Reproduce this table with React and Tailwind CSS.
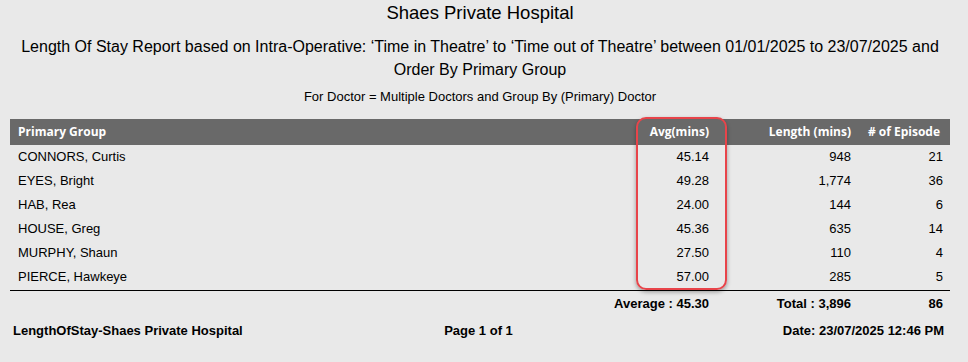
import React from 'react';

const rows = [
  { name: 'CONNORS, Curtis', avg: '45.14', length: '948', episodes: '21' },
  { name: 'EYES, Bright', avg: '49.28', length: '1,774', episodes: '36' },
  { name: 'HAB, Rea', avg: '24.00', length: '144', episodes: '6' },
  { name: 'HOUSE, Greg', avg: '45.36', length: '635', episodes: '14' },
  { name: 'MURPHY, Shaun', avg: '27.50', length: '110', episodes: '4' },
  { name: 'PIERCE, Hawkeye', avg: '57.00', length: '285', episodes: '5' },
];

const cols = 'grid grid-cols-[1fr_120px_142px_92px] pl-[8px] pr-[7px]';

const App = () => {
  return (
    <div className="relative w-[968px] h-[362px] bg-[#e9e9e9] text-black font-['Liberation_Sans',Arial,sans-serif] overflow-hidden">
      <div className="pl-[10px] pr-[18px]">
        <h1 className="text-center text-[18.5px] leading-[22px] pt-[2px]">Shaes Private Hospital</h1>
        <p className="text-center text-[16px] leading-[23px] mt-[11px]">
          Length Of Stay Report based on Intra-Operative: ‘Time in Theatre’ to ‘Time out of Theatre’ between 01/01/2025 to 23/07/2025 and
          <br />
          Order By Primary Group
        </p>
        <p className="text-center text-[13px] leading-[16px] mt-[8px]">
          For Doctor = Multiple Doctors and Group By (Primary) Doctor
        </p>

        <div className="mt-[14px]">
          <div className={`${cols} h-[26px] items-center bg-[#696969] text-white font-['Open_Sans',sans-serif] font-bold text-[12px]`}>
            <div>Primary Group</div>
            <div className="text-right">Avg(mins)</div>
            <div className="text-right">Length (mins)</div>
            <div className="text-right pr-[3px]">
              # of Episode
            </div>
          </div>
          <div className="border-b border-black">
            {rows.map((r) => (
              <div key={r.name} className={`${cols} h-[24px] items-center text-[13px]`}>
                <div>{r.name}</div>
                <div className="text-right">{r.avg}</div>
                <div className="text-right">{r.length}</div>
                <div className="text-right">{r.episodes}</div>
              </div>
            ))}
            <div className="h-[1px]" />
          </div>
          <div className={`${cols} h-[26px] items-center text-[13px] font-bold`}>
            <div></div>
            <div className="text-right">Average : 45.30</div>
            <div className="text-right">Total : 3,896</div>
            <div className="text-right">86</div>
          </div>
          <div className="grid grid-cols-3 items-center h-[28px] text-[13px] font-bold pl-[3px] pr-[6px]">
            <div className="whitespace-nowrap">LengthOfStay-Shaes Private Hospital</div>
            <div className="text-center">Page 1 of 1</div>
            <div className="text-right whitespace-nowrap">Date: 23/07/2025 12:46 PM</div>
          </div>
        </div>
      </div>

      <div className="absolute left-[636px] top-[117px] w-[91px] h-[173px] border-2 border-[#e8444a] rounded-[10px] shadow-[0_2px_4px_rgba(0,0,0,0.35)] pointer-events-none" />
    </div>
  );
};

export default App;
